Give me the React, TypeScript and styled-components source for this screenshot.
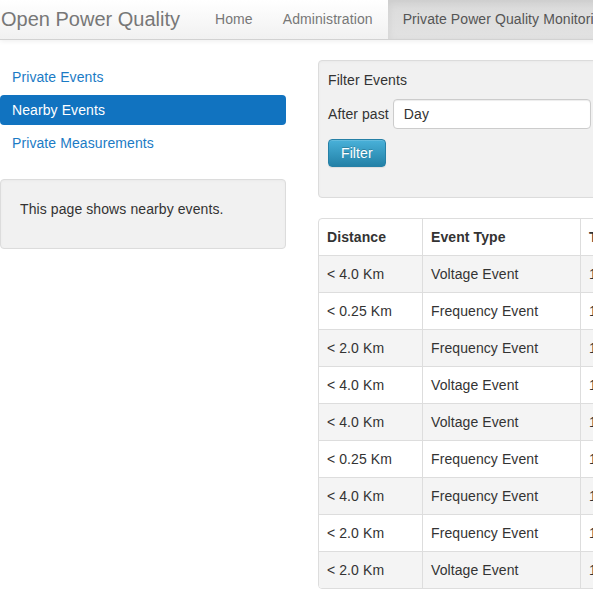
import React from "react";
import styled, { createGlobalStyle } from "styled-components";

const Global = createGlobalStyle`
  html, body { margin: 0; padding: 0; overflow: hidden; background: #fff; }
  body {
    font-family: "Liberation Sans", Arial, Helvetica, sans-serif;
    font-size: 14px;
    line-height: 20px;
    letter-spacing: 0.09px;
    color: #333;
  }
  * { box-sizing: border-box; }
`;

const Page = styled.div`
  width: 1200px;
`;

const Navbar = styled.nav`
  display: flex;
  height: 40px;
  background: linear-gradient(to bottom, #ffffff 0%, #f1f1f1 100%);
  border-bottom: 1px solid #d2d2d2;
  box-shadow: 0 1px 5px rgba(0, 0, 0, 0.075);
  white-space: nowrap;
`;

const Brand = styled.a`
  display: block;
  font-size: 20px;
  letter-spacing: 0;
  line-height: 39px;
  color: #777;
  padding: 0 0 0 1px;
  width: 200px;
  text-decoration: none;
`;

const NavLink = styled.a<{ $active?: boolean }>`
  display: block;
  padding: 0 15px;
  line-height: 39px;
  color: ${(p) => (p.$active ? "#555" : "#777")};
  text-decoration: none;
  background: ${(p) =>
    p.$active ? "linear-gradient(to bottom, #dbdbdb 0%, #e2e2e2 100%)" : "transparent"};
  box-shadow: ${(p) => (p.$active ? "inset 0 3px 9px rgba(0,0,0,0.075)" : "none")};
`;

const Main = styled.div`
  display: grid;
  grid-template-columns: 286px 640px;
  column-gap: 32px;
  padding-top: 20px;
  align-items: start;
`;

const Sidebar = styled.div`
  padding-top: 2px;
`;

const Pills = styled.ul`
  list-style: none;
  margin: 0;
  padding: 0;
  display: flex;
  flex-direction: column;
  gap: 3px;
`;

const Pill = styled.a<{ $active?: boolean }>`
  display: block;
  padding: 5px 12px;
  line-height: 20px;
  border-radius: 4px;
  text-decoration: none;
  color: ${(p) => (p.$active ? "#fff" : "#1b7bc5")};
  background: ${(p) => (p.$active ? "#1173c0" : "transparent")};
`;

const Well = styled.div`
  background: #f1f1f1;
  border: 1px solid #dcdcdc;
  border-radius: 4px;
  box-shadow: inset 0 1px 3px rgba(0, 0, 0, 0.03);
`;

const InfoWell = styled(Well)`
  margin-top: 21px;
  padding: 19px;
`;

const Para = styled.p`
  margin: 0 0 10px;
`;

const FilterWell = styled(Well)`
  padding: 9px 9px 30px;
`;

const FormRow = styled.div`
  display: flex;
  align-items: center;
  margin-top: 9px;
`;

const Label = styled.label`
  margin-right: 4px;
`;

const Select = styled.div`
  width: 198px;
  height: 30px;
  background: #fff;
  border: 1px solid #cccccc;
  border-radius: 4px;
  padding: 0 10px;
  line-height: 28px;
  box-shadow: inset 0 1px 1px rgba(0, 0, 0, 0.075);
`;

const Button = styled.button`
  display: block;
  margin-top: 10px;
  height: 28px;
  padding: 0 12px;
  font-family: inherit;
  font-size: 14px;
  letter-spacing: inherit;
  color: #fff;
  background: linear-gradient(to bottom, #49b1d9 0%, #2381a7 100%);
  border: 1px solid #2680a6;
  border-radius: 4px;
  text-shadow: 0 -1px 0 rgba(0, 0, 0, 0.2);
  box-shadow: inset 0 1px 0 rgba(255, 255, 255, 0.15), 0 1px 1px rgba(0, 0, 0, 0.075);
`;

const TableWrap = styled.div`
  margin-top: 20px;
  border: 1px solid #dddddd;
  border-radius: 4px;
  overflow: hidden;
`;

const Table = styled.table`
  border-collapse: separate;
  border-spacing: 0;
  width: 100%;
  table-layout: fixed;
`;

const Th = styled.th<{ $w?: number }>`
  text-align: left;
  font-weight: bold;
  padding: 8px;
  line-height: 20px;
  border-right: 1px solid #dddddd;
  border-bottom: 1px solid #dddddd;
  white-space: nowrap;
  overflow: hidden;
  width: ${(p) => (p.$w ? `${p.$w}px` : "auto")};
`;

const Tr = styled.tr<{ $striped?: boolean }>`
  background: ${(p) => (p.$striped ? "#f4f4f4" : "#fff")};
`;

const Td = styled.td<{ $last?: boolean }>`
  padding: 8px;
  line-height: 20px;
  border-right: 1px solid #dddddd;
  border-bottom: ${(p) => (p.$last ? "none" : "1px solid #dddddd")};
  white-space: nowrap;
  overflow: hidden;
`;

const rows = [
  ["< 4.0 Km", "Voltage Event", "1/22/2017, 10:41:06 AM"],
  ["< 0.25 Km", "Frequency Event", "1/22/2017, 10:40:12 AM"],
  ["< 2.0 Km", "Frequency Event", "1/22/2017, 10:38:51 AM"],
  ["< 4.0 Km", "Voltage Event", "1/22/2017, 10:37:20 AM"],
  ["< 4.0 Km", "Voltage Event", "1/22/2017, 10:35:02 AM"],
  ["< 0.25 Km", "Frequency Event", "1/22/2017, 10:33:45 AM"],
  ["< 4.0 Km", "Frequency Event", "1/22/2017, 10:31:19 AM"],
  ["< 2.0 Km", "Frequency Event", "1/22/2017, 10:29:58 AM"],
  ["< 2.0 Km", "Voltage Event", "1/22/2017, 10:27:33 AM"],
];

export default function App() {
  return (
    <Page>
      <Global />
      <Navbar>
        <Brand>Open Power Quality</Brand>
        <NavLink>Home</NavLink>
        <NavLink>Administration</NavLink>
        <NavLink $active>Private Power Quality Monitoring</NavLink>
      </Navbar>
      <Main>
        <Sidebar>
          <Pills>
            <li><Pill>Private Events</Pill></li>
            <li><Pill $active>Nearby Events</Pill></li>
            <li><Pill>Private Measurements</Pill></li>
          </Pills>
          <InfoWell>
            <Para>This page shows nearby events.</Para>
          </InfoWell>
        </Sidebar>
        <div>
          <FilterWell>
            <div>Filter Events</div>
            <FormRow>
              <Label>After past</Label>
              <Select>Day</Select>
            </FormRow>
            <Button>Filter</Button>
          </FilterWell>
          <TableWrap>
            <Table>
              <thead>
                <tr>
                  <Th $w={104}>Distance</Th>
                  <Th $w={158}>Event Type</Th>
                  <Th>Timestamp</Th>
                </tr>
              </thead>
              <tbody>
                {rows.map((r, i) => (
                  <Tr key={i} $striped={i % 2 === 0}>
                    <Td $last={i === rows.length - 1}>{r[0]}</Td>
                    <Td $last={i === rows.length - 1}>{r[1]}</Td>
                    <Td $last={i === rows.length - 1}>{r[2]}</Td>
                  </Tr>
                ))}
              </tbody>
            </Table>
          </TableWrap>
        </div>
      </Main>
    </Page>
  );
}
